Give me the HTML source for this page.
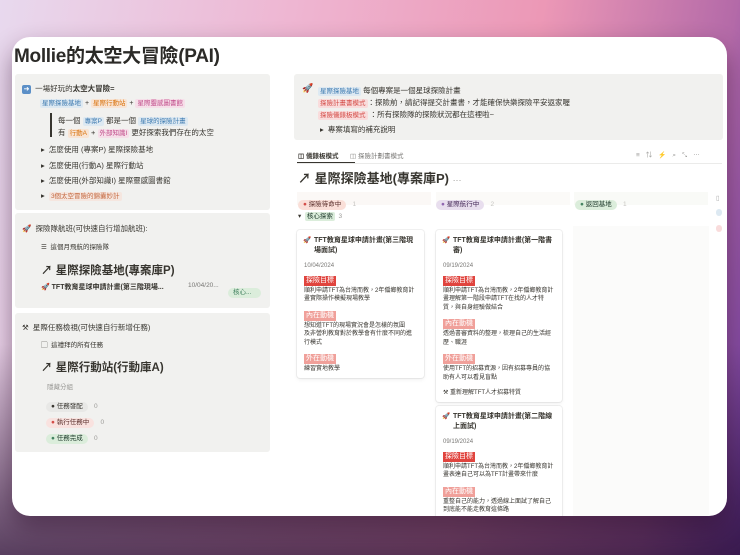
<!DOCTYPE html>
<html><head><meta charset="utf-8"><style>
*{margin:0;padding:0;box-sizing:border-box}
body{width:740px;height:555px;overflow:hidden;position:relative;font-family:"Liberation Sans","Noto Sans CJK TC",sans-serif;color:#37352f;
background:linear-gradient(180deg,rgba(0,0,0,0) 0%,rgba(0,0,0,0) 62%,rgba(40,15,50,.75) 100%),linear-gradient(100deg,#e8d9ee 0%,#eeb6d2 35%,#ec98b6 65%,#b46aa8 88%,#6a3aa0 100%);}
.abs{position:absolute;white-space:nowrap}
#panel{position:absolute;left:12px;top:37px;width:715px;height:479px;background:#fff;border-radius:18px;box-shadow:0 12px 25px rgba(40,10,40,.45);overflow:hidden}
.box{position:absolute;background:#f1f1ef;border-radius:3px}
.t{font-size:7.5px}
.s{font-size:6.5px}
.tag{display:inline-block;padding:0 2px;border-radius:2px;font-size:6.5px;line-height:9px}
.b{background:#dde9f2;color:#3d7ab0}.o{background:#f8e4d4;color:#d9730d}.p{background:#f6dfe9;color:#c14c8a}.r{background:#f9dcdc;color:#d44c47}
.pill{display:inline-block;border-radius:8px;padding:0 5px;font-size:6.5px;line-height:10px}
.card{position:absolute;background:#fff;border-radius:3px;box-shadow:0 0 0 1px rgba(15,15,15,.06),0 2px 4px rgba(15,15,15,.06);padding:6px 7px;font-size:6px;line-height:8.5px;color:#37352f}
.card .ti{font-size:7px;font-weight:bold;line-height:10px;padding-left:10px;position:relative;white-space:normal}
.card .ti:before{content:"🚀";position:absolute;left:-1px;font-size:6.5px}
.rt{display:table;background:#e0443e;color:#fff;padding:0 2px;font-size:7px;line-height:10px;margin-top:5px;margin-bottom:1px}
.rt2{display:table;background:#f0a09a;color:#fff;padding:0 2px;font-size:7px;line-height:10px;margin-top:7px;margin-bottom:1px}
.d{color:#787774;margin-top:6px;font-size:6px}
</style></head><body>
<div id="panel">
<div class="abs" style="left:2px;top:4px;font-size:19px;font-weight:bold;color:#2b2a27;letter-spacing:-0.3px">Mollie的太空大冒險(PAI)</div>

<div class="box" style="left:3px;top:37px;width:255px;height:136px"></div>
<div class="abs t" style="left:10px;top:46px"><span style="display:inline-block;width:9px;height:9px;background:#5b8fc7;color:#fff;border-radius:2px;font-size:7px;line-height:9px;text-align:center">➜</span>&nbsp; 一場好玩的<b>太空大冒險=</b></div>
<div class="abs" style="left:28px;top:62px;font-size:7px"><span class="tag b">星際探險基地</span> + <span class="tag o">星際行動站</span> + <span class="tag p">星際靈感圖書館</span></div>
<div class="abs" style="left:38px;top:76px;width:1.5px;height:24px;background:#37352f"></div>
<div class="abs t" style="left:46px;top:78px">每一個 <span class="tag b">專案P</span> 都是一個 <span class="tag b">星球的探險計畫</span></div>
<div class="abs t" style="left:46px;top:90px">有 <span class="tag o">行動A</span> + <span class="tag p">外部知識I</span> 更好探索我們存在的太空</div>
<div class="abs t" style="left:29px;top:107px">▸&nbsp; 怎麼使用 (專案P) 星際探險基地</div>
<div class="abs t" style="left:29px;top:123px">▸&nbsp; 怎麼使用(行動A) 星際行動站</div>
<div class="abs t" style="left:29px;top:138px">▸&nbsp; 怎麼使用(外部知識I) 星際靈感圖書館</div>
<div class="abs t" style="left:29px;top:154px">▸&nbsp; <span class="tag" style="background:#f5e6df;color:#c4673d">3個太空冒險的錦囊妙計</span></div>

<div class="box" style="left:3px;top:176px;width:255px;height:95px"></div>
<div class="abs t" style="left:10px;top:186px">🚀&nbsp; 探險隊航班(可快速自行增加航班):</div>
<div class="abs s" style="left:29px;top:204px">☰&nbsp; 這個月飛航的探險隊</div>
<div class="abs" style="left:29px;top:225px;font-size:11.5px;font-weight:bold">↗ 星際探險基地(專案庫P)</div>
<div class="abs" style="left:29px;top:245px;font-size:7px;font-weight:bold">🚀 TFT教育星球申請計畫(第三階現場...</div>
<div class="abs s" style="left:176px;top:245px;color:#787774">10/04/20...</div>
<div class="abs" style="left:216px;top:244px"><span class="pill" style="background:#dbeddb;color:#448361;padding:0 10px 0 5px">核心...</span></div>

<div class="box" style="left:3px;top:276px;width:255px;height:139px"></div>
<div class="abs t" style="left:10px;top:285px">⚒&nbsp; 星際任務檢視(可快速自行新增任務)</div>
<div class="abs s" style="left:29px;top:302px">▢&nbsp; 這禮拜的所有任務</div>
<div class="abs" style="left:29px;top:322px;font-size:11.5px;font-weight:bold">↗ 星際行動站(行動庫A)</div>
<div class="abs s" style="left:35px;top:344px;color:#9b9a97">隱藏分組</div>
<div class="abs" style="left:34px;top:358px"><span class="pill" style="background:#e8e8e6">● 任務發配</span> <span class="s" style="color:#9b9a97">&nbsp;0</span></div>
<div class="abs" style="left:34px;top:374px"><span class="pill" style="background:#f9e2df;color:#5a2e2a"><span style="color:#d44c47">●</span> 執行任務中</span> <span class="s" style="color:#9b9a97">&nbsp;0</span></div>
<div class="abs" style="left:34px;top:390px"><span class="pill" style="background:#dbeddb;color:#1c3829"><span style="color:#448361">●</span> 任務完成</span> <span class="s" style="color:#9b9a97">&nbsp;0</span></div>

<div class="box" style="left:282px;top:37px;width:429px;height:66px"></div>
<div class="abs" style="left:290px;top:46px;font-size:9px">🚀</div>
<div class="abs t" style="left:306px;top:48px"><span class="tag b">星際探險基地</span> 每個專案是一個星球探險計畫</div>
<div class="abs t" style="left:306px;top:60px"><span class="tag r">探險計畫書模式</span>：探險前，請記得提交計畫書，才能確保快樂探險平安返家喔</div>
<div class="abs t" style="left:306px;top:72px"><span class="tag r">探險儀錶板模式</span> ：所有探險隊的探險狀況都在這裡啦~</div>
<div class="abs t" style="left:308px;top:87px">▸&nbsp; 專案填寫的補充說明</div>

<div class="abs s" style="left:286px;top:113px;font-weight:bold">◫ 儀錶板模式</div>
<div class="abs s" style="left:338px;top:113px;color:#787774">◫ 探險計劃書模式</div>
<div class="abs s" style="left:624px;top:112px;color:#9b9a97;letter-spacing:6px">≡⇅⚡⌕⤡⋯</div>
<div class="abs" style="left:285px;top:125px;width:58px;height:1.5px;background:#37352f"></div>
<div class="abs" style="left:285px;top:126px;width:425px;height:1px;background:#ebebea"></div>
<div class="abs" style="left:286px;top:131px;font-size:13px;font-weight:bold">↗ 星際探險基地(專案庫P) <span style="color:#9b9a97;font-weight:normal;font-size:9px">···</span></div>

<div class="abs" style="left:285px;top:155px;width:134px;height:13px;background:#fbf8f6"></div>
<div class="abs" style="left:424px;top:155px;width:134px;height:13px;background:#fbfaf8"></div>
<div class="abs" style="left:562px;top:155px;width:134px;height:13px;background:#f9faf7"></div>
<div class="abs" style="left:561px;top:189px;width:136px;height:290px;background:#fbfbfa"></div>
<div class="abs" style="left:286px;top:156px"><span class="pill" style="background:#fadfd8;color:#5a2e2a"><span style="color:#d44c47">●</span> 探險待命中</span> <span class="s" style="color:#c6c5c2">&nbsp;1</span></div>
<div class="abs" style="left:424px;top:156px"><span class="pill" style="background:#e8deee;color:#412454"><span style="color:#9065b0">●</span> 星際航行中</span> <span class="s" style="color:#c6c5c2">&nbsp;2</span></div>
<div class="abs" style="left:563px;top:156px"><span class="pill" style="background:#dbeddb;color:#1c3829"><span style="color:#448361">●</span> 返回基地</span> <span class="s" style="color:#c6c5c2">&nbsp;1</span></div>
<div class="abs s" style="left:704px;top:157px;color:#aaa">▯</div>
<div class="abs" style="left:704px;top:172px;width:6px;height:7px;border-radius:3px;background:#dde9f2"></div>
<div class="abs" style="left:704px;top:188px;width:6px;height:7px;border-radius:3px;background:#f9dcdc"></div>
<div class="abs" style="left:286px;top:175px;font-size:6.5px">▾ &nbsp;<span class="tag" style="background:#dbeddb;color:#1c3829">核心探索</span> <span style="color:#9b9a97">&nbsp;3</span></div>

<div class="card" style="left:285px;top:193px;width:127px;height:148px">
<div class="ti">TFT教育星球申請計畫(第三階現場面試)</div>
<div class="d">10/04/2024</div>
<span class="rt">探險目標</span><div>順利申請TFT為台灣而教，2年偏鄉教育計畫實際操作模擬現場教學</div>
<span class="rt2">內在動機</span><div>想知道TFT的現場實況會是怎樣的氛圍<br>及非營利教育對於教學會有什麼不同的進行模式</div>
<span class="rt2">外在動機</span><div>練習實地教學</div>
</div>
<div class="card" style="left:424px;top:193px;width:126px;height:172px">
<div class="ti">TFT教育星球申請計畫(第一階書審)</div>
<div class="d">09/19/2024</div>
<span class="rt">探險目標</span><div>順利申請TFT為台灣而教，2年偏鄉教育計畫理解第一階段申請TFT在找的人才特質，與自身經驗做結合</div>
<span class="rt2">內在動機</span><div>透過書審資料的整理，梳理自己的生活經歷、職涯</div>
<span class="rt2">外在動機</span><div>使用TFT的招募資源，因有招募專員的協助有人可以看見盲點</div>
<div style="margin-top:7px">⚒ 重新理解TFT人才招募特質</div>
</div>
<div class="card" style="left:424px;top:369px;width:126px;height:120px">
<div class="ti">TFT教育星球申請計畫(第二階線上面試)</div>
<div class="d">09/19/2024</div>
<span class="rt">探險目標</span><div>順利申請TFT為台灣而教，2年偏鄉教育計畫表達自己可以為TFT計畫帶來什麼</div>
<span class="rt2">內在動機</span><div>重整自己的能力，透過線上面試了解自己到底能不能走教育這條路</div>
</div>
</div>
</body></html>
